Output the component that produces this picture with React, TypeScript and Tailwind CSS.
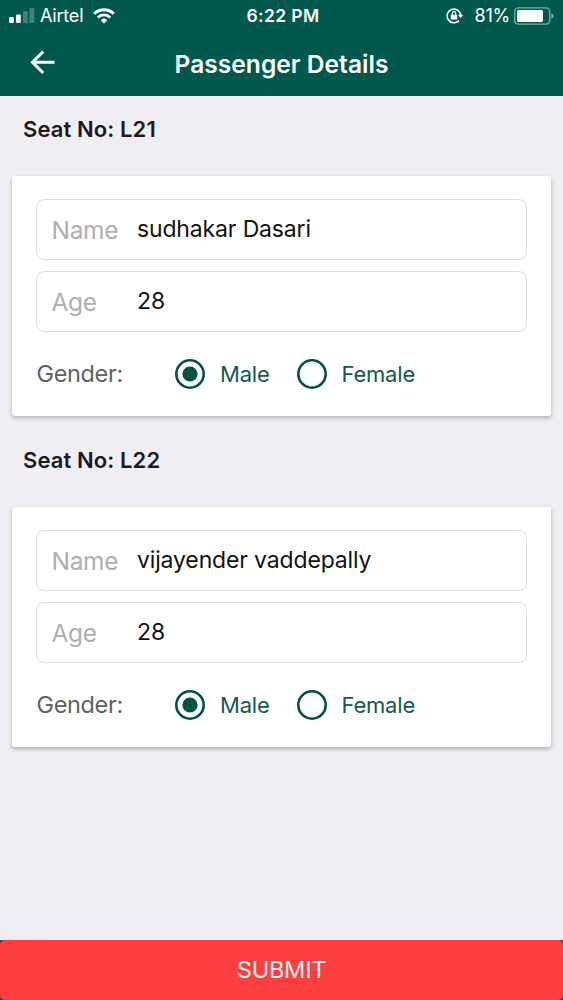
import React, { useState } from "react";

type Passenger = { seat: string; name: string; age: string };

const passengers: Passenger[] = [
  { seat: "L21", name: "sudhakar Dasari", age: "28" },
  { seat: "L22", name: "vijayender vaddepally", age: "28" },
];

function StatusBar() {
  return (
    <div className="relative flex h-8 items-center justify-center">
      <div className="absolute left-[9px] top-0 flex h-8 items-center">
        <svg width="26" height="16" viewBox="0 0 26 16" fill="#fff">
          <rect x="0" y="9" width="4.8" height="6" rx="1.2" />
          <rect x="7" y="6.5" width="4.8" height="8.5" rx="1.2" />
          <rect x="14" y="3" width="4.8" height="12" rx="1.2" opacity="0.25" />
          <rect x="20.5" y="0" width="4.8" height="15" rx="1.2" opacity="0.25" />
        </svg>
        <span className="ml-[5px] text-[18px] leading-8 tracking-[-0.2px]">Airtel</span>
        <svg className="ml-[10px]" width="22" height="16" viewBox="0 0 22 16" fill="none" stroke="#fff">
          <path d="M1.2 5.8a14 14 0 0 1 19.6 0" strokeWidth="3" />
          <path d="M4.8 9.4a9 9 0 0 1 12.4 0" strokeWidth="2.7" />
          <path d="M7.6 12.2a5 5 0 0 1 6.8 0L11 15.6z" fill="#fff" stroke="none" />
        </svg>
      </div>
      <span className="pl-[3px] text-[17.5px] font-semibold leading-8 tracking-[0.35px]">6:22 PM</span>
      <div className="absolute right-[8px] top-0 flex h-8 items-center">
        <svg width="18" height="16" viewBox="0 0 18 16" fill="none" stroke="#fff" strokeWidth="1.6">
          <path d="M12.9 12.6a6.8 6.8 0 1 1 1.8-5.6" />
          <path d="M12 6.7h5.2l-2.6 3.6z" fill="#fff" stroke="none" />
          <rect x="4.8" y="6.8" width="6.4" height="4.8" rx="0.6" fill="#fff" stroke="none" />
          <path d="M6.3 7V5.4a1.7 1.7 0 0 1 3.4 0V7" strokeWidth="1.2" />
        </svg>
        <span className="ml-[10px] text-[18px] leading-8 tracking-[-0.2px]">81%</span>
        <svg className="ml-[4px]" width="41" height="18" viewBox="0 0 41 18">
          <rect x="0.7" y="0.9" width="35" height="16.2" rx="3.6" fill="none" stroke="#fff" strokeOpacity="0.5" strokeWidth="1.3" />
          <rect x="3" y="3" width="26" height="12" rx="1.6" fill="#fff" />
          <path d="M37.3 6.2c3 1 3 4.6 0 5.6z" fill="#fff" fillOpacity="0.5" />
        </svg>
      </div>
    </div>
  );
}

function Field({ label, value }: { label: string; value: string }) {
  return (
    <label className="flex h-[61px] items-center rounded-[8px] border border-[#dedede] pl-[14.5px]">
      <span className="w-[85.5px] pt-[1px] text-[24.5px] font-normal leading-8 tracking-[-0.3px] text-[#b0aeb1]">{label}</span>
      <input
        defaultValue={value}
        className="min-w-0 flex-1 bg-transparent pb-[2px] text-[23px] leading-8 tracking-[-0.15px] text-[#111] outline-none"
      />
    </label>
  );
}

function Radio({ label, checked, onSelect }: { label: string; checked: boolean; onSelect: () => void }) {
  return (
    <button type="button" role="radio" aria-checked={checked} onClick={onSelect} className="flex items-center gap-[15px]">
      <svg width="30" height="30" viewBox="0 0 30 30">
        <circle cx="15" cy="15" r="13.7" fill="none" stroke="#00543f" strokeWidth="2.6" />
        {checked && <circle cx="15" cy="15" r="7.6" fill="#00543f" />}
      </svg>
      <span className="text-[22px] leading-8 tracking-[-0.2px] text-[#125b49]">{label}</span>
    </button>
  );
}

function PassengerCard({ passenger }: { passenger: Passenger }) {
  const [gender, setGender] = useState("Male");
  return (
    <section className="px-3">
      <h2 className="h-20 pl-[11px] pt-[17px] text-[22px] font-semibold leading-8 tracking-[0.1px] text-[#1b1a1f]">
        Seat No: {passenger.seat}
      </h2>
      <div className="mb-[11px] flex h-[240px] flex-col rounded-[3px] bg-white px-6 pt-[23px] shadow-[0_2px_4px_rgba(0,0,0,0.28)]">
        <Field label="Name" value={passenger.name} />
        <div className="h-[11px]" />
        <Field label="Age" value={passenger.age} />
        <div role="radiogroup" className="mt-[25.5px] flex items-center">
          <span className="w-[139px] pl-[0.5px] text-[23.5px] font-normal leading-8 tracking-[-0.35px] text-[#625f63]">Gender:</span>
          <div className="w-[121.5px]">
            <Radio label="Male" checked={gender === "Male"} onSelect={() => setGender("Male")} />
          </div>
          <Radio label="Female" checked={gender === "Female"} onSelect={() => setGender("Female")} />
        </div>
      </div>
    </section>
  );
}

export default function App() {
  return (
    <div className="flex h-[1000px] w-full flex-col overflow-hidden bg-[#f0eef3] font-['Inter',sans-serif]">
      <header className="h-24 shrink-0 bg-[#00594c] text-white">
        <StatusBar />
        <div className="relative flex h-16 items-center justify-center">
          <button type="button" aria-label="Back" className="absolute left-[30px] top-[18px]">
            <svg width="26" height="25" viewBox="0 0 26 25" fill="none" stroke="#fff" strokeWidth="3">
              <path d="M24.5 12.3H3M13.2 1.6L2.5 12.3l10.7 10.7" />
            </svg>
          </button>
          <h1 className="text-[24.5px] font-semibold leading-8 tracking-[0.05px]">Passenger Details</h1>
        </div>
      </header>
      <main className="flex-1">
        {passengers.map((p) => (
          <PassengerCard key={p.seat} passenger={p} />
        ))}
      </main>
      <div className="h-[60px] shrink-0 bg-[#324b48]">
        <button type="button" className="h-full w-full rounded-[5px] bg-[#fd3f3f] text-[23.5px] leading-8 tracking-[-0.2px] text-[#fff0ef]">
          SUBMIT
        </button>
      </div>
    </div>
  );
}
